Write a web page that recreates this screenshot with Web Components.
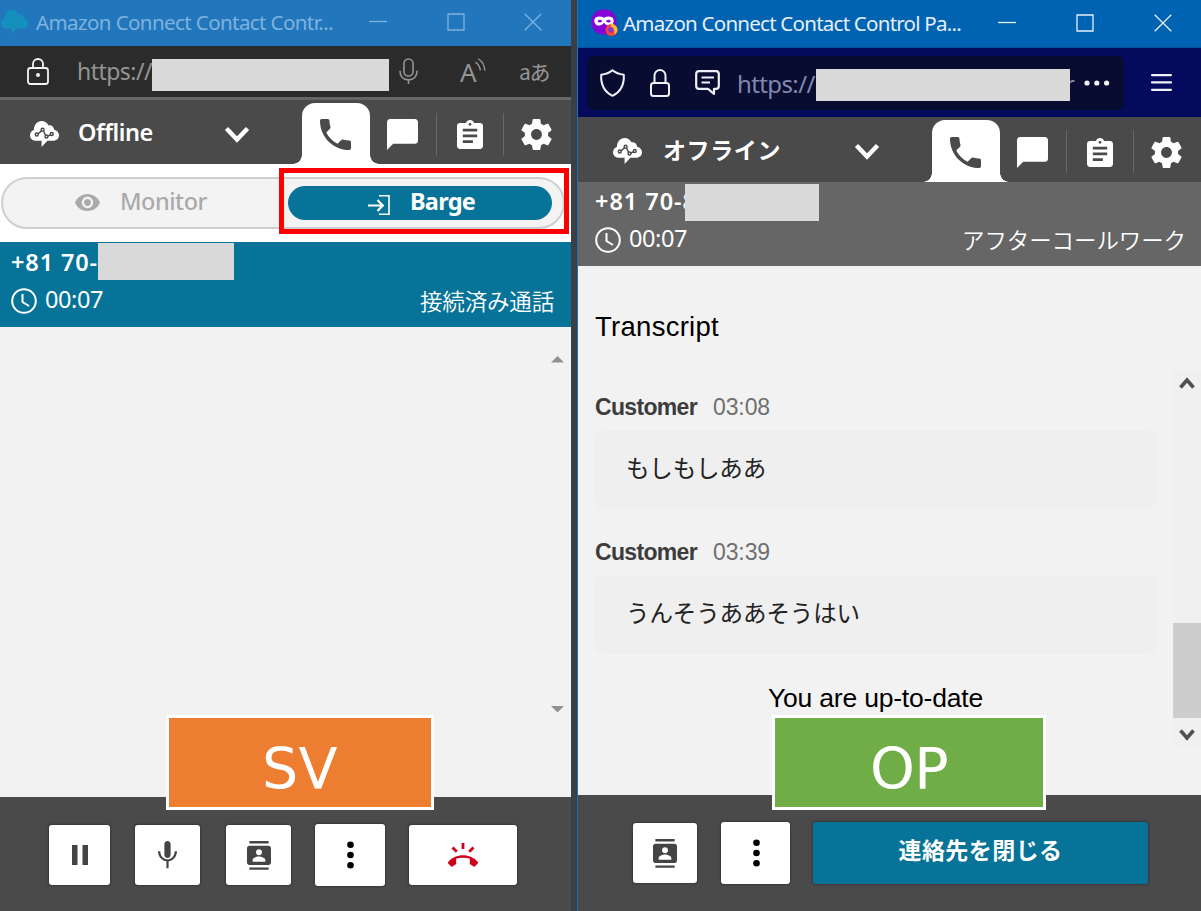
<!DOCTYPE html>
<html lang="ja">
<head>
<meta charset="utf-8">
<title>Contact Control Panel</title>
<style>
    body{
        margin: 0;
        width: 1201px;
        height: 911px;
        overflow: hidden;
        background-color: #3a4046;
        font-family: "Noto Sans", "Noto Sans CJK JP", sans-serif;
    }
</style>
</head>
<body>
<ccp-desktop></ccp-desktop>
<script>
const icons = {
    cloud: ['0 0 30 27', '<path fill="currentColor" d="M7 20.500C2.500 20.500 0 18 0 15c0-3 1.600-5 4-5.700C4 4 7.500 0 12 0c3.300 0 5.700 1.800 7 4.500 3-.8 5.700 1.300 6 4.500 3 .6 5 2.800 5 5.800 0 3.300-2.500 5.700-6 5.700h-6L12 27v-6.500z"/><g class="line" fill="none" stroke="#4a4a4a" stroke-width="1.500"><path d="m8 13.500 4-3.300M14 10.500l2 4M18.500 15.500l3-1.500"/><circle cx="7" cy="14" r="1.500"/><circle cx="13" cy="9" r="1.500"/><circle cx="17" cy="16" r="1.500"/><circle cx="22.500" cy="13.500" r="1.500"/></g>'],
    cloudSolid: ['0 0 30 27', '<path fill="currentColor" d="M7 20.500C2.500 20.500 0 18 0 15c0-3 1.600-5 4-5.700C4 4 7.500 0 12 0c3.300 0 5.700 1.800 7 4.500 3-.8 5.700 1.300 6 4.500 3 .6 5 2.800 5 5.800 0 3.300-2.500 5.700-6 5.700h-6L12 27v-6.500z"/>'],
    chevron: ['0 0 26 17', '<path d="m2.500 2.500 10.500 11 10.500-11" fill="none" stroke="currentColor" stroke-width="4.500"/>'],
    phone: ['3 3 18 18', '<path fill="currentColor" d="M6.620 10.790c1.440 2.830 3.760 5.140 6.590 6.590l2.200-2.200c.27-.27.67-.36 1.020-.24 1.120.37 2.330.57 3.570.57.55 0 1 .45 1 1V20c0 .55-.45 1-1 1-9.390 0-17-7.610-17-17 0-.55.45-1 1-1h3.500c.55 0 1 .45 1 1 0 1.250.2 2.450.57 3.570.11.35.03.74-.25 1.020l-2.200 2.200z"/>'],
    chat: ['2 2 20 20', '<path fill="currentColor" d="M20 2H4c-1.100 0-2 .9-2 2v18l4-4h14c1.100 0 2-.9 2-2V4c0-1.100-.9-2-2-2z"/>'],
    clipboard: ['3 1 18 20', '<path fill="currentColor" d="M19 3h-4.180C14.400 1.840 13.300 1 12 1c-1.300 0-2.400.84-2.820 2H5c-1.100 0-2 .9-2 2v14c0 1.100.9 2 2 2h14c1.100 0 2-.9 2-2V5c0-1.100-.9-2-2-2zm-7 0c.55 0 1 .45 1 1s-.45 1-1 1-1-.45-1-1 .45-1 1-1zm2 14H7v-2h7v2zm3-4H7v-2h10v2zm0-4H7V7h10v2z"/>'],
    gear: ['2 2 20 20', '<path fill="currentColor" d="M19.430 12.980c.04-.32.07-.64.07-.98s-.03-.66-.07-.98l2.110-1.650c.19-.15.24-.42.12-.64l-2-3.460c-.12-.22-.39-.3-.61-.22l-2.490 1c-.52-.4-1.080-.73-1.690-.98l-.38-2.650C14.460 2.180 14.250 2 14 2h-4c-.25 0-.46.18-.49.42l-.38 2.650c-.61.25-1.170.59-1.690.98l-2.490-1c-.23-.09-.49 0-.61.22l-2 3.460c-.13.22-.07.49.12.64l2.110 1.650c-.04.32-.07.65-.07.98s.03.66.07.98l-2.110 1.650c-.19.15-.24.42-.12.64l2 3.460c.12.22.39.3.61.22l2.490-1c.52.4 1.080.73 1.690.98l.38 2.650c.03.24.24.42.49.42h4c.25 0 .46-.18.49-.42l.38-2.650c.61-.25 1.170-.59 1.690-.98l2.490 1c.23.09.49 0 .61-.22l2-3.460c.12-.22.07-.49-.12-.64l-2.110-1.650zM12 15.500c-1.930 0-3.500-1.570-3.500-3.500s1.570-3.500 3.500-3.500 3.500 1.570 3.500 3.500-1.570 3.500-3.500 3.500z"/>'],
    eye: ['1 4.500 22 15', '<path fill="currentColor" d="M12 4.500C7 4.500 2.730 7.610 1 12c1.730 4.390 6 7.500 11 7.500s9.270-3.110 11-7.500c-1.730-4.390-6-7.500-11-7.500zM12 17c-2.760 0-5-2.240-5-5s2.240-5 5-5 5 2.240 5 5-2.240 5-5 5zm0-8c-1.660 0-3 1.340-3 3s1.340 3 3 3 3-1.340 3-3-1.340-3-3-3z"/>'],
    enter: ['0 0 22 20', '<g fill="none" stroke="currentColor"><path stroke-width="1.600" d="M11 .8h10v18.400H11"/><path stroke-width="2.200" d="M0 10.500h14M9.500 5l5.300 5.500L9.500 16"/></g>'],
    clock: ['0 0 26 26', '<g fill="none" stroke="currentColor" stroke-width="2"><circle cx="13" cy="13" r="11.800"/><path d="M11.500 6v8l6.500 4"/></g>'],
    pause: ['0 0 16 20', '<path fill="currentColor" d="M0 0h5.500v20H0zM10.500 0H16v20h-5.500z"/>'],
    mic: ['5 2 14 20', '<path fill="currentColor" d="M12 14.500c1.400 0 2.300-1 2.300-2.500V4.500C14.300 3 13.400 2 12 2S9.700 3 9.700 4.500V12c0 1.500.9 2.500 2.300 2.500zm5.300-5c0 3.500-2.500 6-5.300 6S6.700 13 6.700 9.500H5c0 4 2.800 7 6.200 7.500V22h1.600v-5c3.400-.5 6.200-3.500 6.200-7.500z"/>'],
    micLine: ['0 0 20 28', '<g fill="none" stroke="currentColor" stroke-width="1.700"><rect x="5.200" y="1" width="9.600" height="18" rx="4.800"/><path d="M1 13.500c0 6 3.500 9.500 9 9.500s9-3.500 9-9.500M10 23v4.500"/></g>'],
    contact: ['2 0 20 24', '<path fill="currentColor" fill-rule="evenodd" d="M20 4H4c-1.100 0-2 .9-2 2v12c0 1.100.9 2 2 2h16c1.100 0 2-.9 2-2V6c0-1.100-.9-2-2-2zM4 0h16v2H4zM4 22h16v2H4zM12 6.800c1.400 0 2.500 1.100 2.500 2.500s-1.100 2.500-2.500 2.500-2.500-1.100-2.500-2.500 1.100-2.500 2.500-2.500zM17.300 17.200H6.700v-1.400c0-1.900 3.500-2.900 5.300-2.900s5.300 1 5.300 2.900z"/>'],
    dots: ['0 0 7 28', '<g fill="currentColor"><circle cx="3.500" cy="3.800" r="3.300"/><circle cx="3.500" cy="14" r="3.300"/><circle cx="3.500" cy="24.200" r="3.300"/></g>'],
    hangup: ['0 0 30 24', '<path fill="currentColor" d="M0 19.200C4 14.500 9.300 12.300 15 12.300s11 2.200 15 6.900c.3.400.3.800 0 1.100l-3.200 3.100c-.4.400-.8.400-1.200.1-1-.9-2-1.600-3.200-2.100-.4-.2-.6-.5-.6-1v-4.800c-4.400-1.100-9.200-1.100-13.600 0v4.800c0 .5-.2.8-.6 1-1.200.5-2.200 1.200-3.200 2.100-.4.300-.8.300-1.200-.1L0 20.300c-.3-.3-.3-.7 0-1.100z"/><g stroke="currentColor" stroke-width="2.800"><path d="M15 0v6M4.500 4.500l4.300 4.300M25.500 4.500l-4.300 4.300"/></g>'],
    minimize: ['0 0 18 18', '<path d="M0 8.500h18" stroke="currentColor" stroke-width="1.300"/>'],
    maximize: ['0 0 18 18', '<path d="M1 1h16v16H1z" fill="none" stroke="currentColor" stroke-width="1.300"/>'],
    close: ['0 0 18 18', '<path d="m.7.700 16.600 16.600M17.300.7.700 17.300" stroke="currentColor" stroke-width="1.300"/>'],
    lockDot: ['0 0 22 27', '<g fill="none" stroke="currentColor" stroke-width="1.800"><rect x="1" y="10" width="20" height="16" rx="2.500"/><path d="M6 10V6a5 5 0 0 1 10 0v4"/></g><circle cx="11" cy="17" r="2" fill="currentColor"/>'],
    lock: ['0 0 20 28', '<g fill="none" stroke="currentColor" stroke-width="2"><rect x="1" y="14" width="18" height="13" rx="2.500"/><path d="M4.500 14V6.500a5.500 5.500 0 0 1 11 0V14"/></g>'],
    shield: ['0 0 25 28', '<path fill="none" stroke="currentColor" stroke-width="2" stroke-linejoin="round" d="M12.500 1.200c3 2.500 7 4 11.300 4.500.5 9-3 17-11.300 21.100C4.200 22.700.7 14.700 1.200 5.700 5.500 5.200 9.500 3.700 12.500 1.200z"/>'],
    notice: ['0 0 25 25', '<g fill="none" stroke="currentColor" stroke-width="2.200" stroke-linejoin="round"><path d="M4 1.200h17c1.800 0 2.800 1 2.800 2.800v12c0 1.800-1 2.800-2.800 2.800h-2V24l-6-5.200H4c-1.800 0-2.800-1-2.800-2.800V4c0-1.800 1-2.800 2.800-2.800z"/><path stroke-width="1.900" d="M6.500 7.500H19M6.500 12.500h8.500"/></g>'],
    more: ['0 0 26 6', '<g fill="currentColor"><circle cx="3" cy="3" r="2.600"/><circle cx="12.800" cy="3" r="2.600"/><circle cx="22.600" cy="3" r="2.600"/></g>'],
    menu: ['0 0 20 18', '<path d="M1 2h18M1 9h18M1 16h18" stroke="currentColor" stroke-width="2.200" stroke-linecap="round"/>'],
    waves: ['0 0 12 15', '<g fill="none" stroke="currentColor" stroke-width="1.500"><path d="M3.500.800C8 3.500 10.500 8 10.800 14"/><path d="M.5 4.500c3 2 4.800 5 5.300 9"/></g>'],
    firefox: ['0 0 27 27', '<circle cx="13" cy="13" r="12.800" fill="#8405d6"/><path fill="#fff" d="M5 8.200c2.500-1.200 5.500-1 8 .5 2.500-1.500 5.500-1.700 8-.5 1.600 1 2 3 1.500 5-.7 2.500-2.700 3.600-5 3.400-2-.1-3.200-1.300-4.500-2.800-1.300 1.500-2.500 2.700-4.500 2.800-2.300.2-4.300-.9-5-3.400-.5-2-.1-4 1.500-5z"/><path fill="#8405d6" d="M6.300 12.300c1.500-2 3.700-2 5 0-1.300 1.700-3.500 1.700-5 0zM15 12.300c1.500-2 3.700-2 5 0-1.300 1.700-3.500 1.700-5 0z"/><circle cx="20.500" cy="21" r="6" fill="#ff4038"/><path fill="#ffbd2e" d="M20 14.500c3.500.5 6.500 3 6.500 6.500-.3 2.500-1.800 4-3.500 4.500 1.500-3 .5-6-3-6.500z"/><circle cx="19.800" cy="20.800" r="2.800" fill="#8338c9"/>'],
    triangle: ['0 0 14 7', '<path d="M0 7 7 0l7 7z" fill="currentColor"/>'],
    arrow: ['0 0 16 13', '<path d="m1.500 10.500 6.500-7.500 6.500 7.500" fill="none" stroke="currentColor" stroke-width="3.600"/>']
};

class CcpIcon extends HTMLElement {
    constructor(){
        super();
        this.attachShadow({mode: 'open'});
    }
    connectedCallback(){
        const [viewBox, shape] = icons[this.getAttribute('name')];
        const [, , w, h] = viewBox.split(' ').map(Number);
        const width = Number(this.getAttribute('width')) || w;
        this.shadowRoot.innerHTML = `
            <style>
                :host{ display: block; flex: none; }
                svg{ display: block; overflow: visible; }
            </style>
            <svg viewBox="${viewBox}" width="${width}" height="${width * h / w}">${shape}</svg>
        `;
    }
}
customElements.define('ccp-icon', CcpIcon);

// One line of text, tracked so that it fills the given width
class FitLabel extends HTMLElement {
    constructor(){
        super();
        this.attachShadow({mode: 'open'});
        this.shadowRoot.innerHTML = `
            <style>
                :host{ display: block; flex: none; line-height: 1; }
                div{ width: max-content; white-space: pre; }
            </style>
            <div><slot></slot></div>
        `;
    }
    connectedCallback(){
        const width = Number(this.getAttribute('width'));
        const line = this.shadowRoot.querySelector('div');
        const natural = line.getBoundingClientRect().width;
        if(!width || !natural) return;
        line.style.letterSpacing = (width - natural) / this.textContent.length + 'px';
        this.style.width = width + 'px';
    }
}
customElements.define('fit-label', FitLabel);

class WindowTitle extends HTMLElement {
    constructor(){
        super();
        this.attachShadow({mode: 'open'});
        this.shadowRoot.innerHTML = `
            <style>
                :host{
                    display: flex;
                    align-items: center;
                    justify-content: space-between;
                    box-sizing: border-box;
                    font-size: 20.5px;
                }
                div{ display: flex; align-items: center; }
                .controls{ column-gap: var(--controls-gap, 59.500px); }
            </style>
            <div><slot></slot></div>
            <div class="controls">
                <ccp-icon name="minimize" width="18"></ccp-icon>
                <ccp-icon name="maximize" width="18"></ccp-icon>
                <ccp-icon name="close" width="18"></ccp-icon>
            </div>
        `;
    }
}
customElements.define('window-title', WindowTitle);

class CcpTabs extends HTMLElement {
    constructor(){
        super();
        this.attachShadow({mode: 'open'});
        this.shadowRoot.innerHTML = `
            <style>
                :host{
                    display: flex;
                    background-color: #4a4a4a;
                    color: #fff;
                    font-size: 23.5px;
                    font-weight: 600;
                }
                .status{
                    flex: 1;
                    display: flex;
                    align-items: center;
                    padding: 4px 52px 0 var(--status-left, 30px);
                }
                .status .chevron{ margin-left: auto; }
                .tab{
                    width: 67px;
                    box-sizing: border-box;
                    display: flex;
                    align-items: center;
                    justify-content: center;
                    padding: 5px 2px 0 0;
                    background: linear-gradient(#686868, #686868) right 0 top 13px / 1px 43px no-repeat;
                }
                .tab.plain{ background: none; padding-right: 3px; }
                .tab.active{
                    position: relative;
                    margin-top: 3px;
                    padding-top: 2px;
                    width: 68px;
                    background: #fff;
                    color: #4a4a4a;
                    border-radius: 13px 13px 0 0;
                }
                .active::before, .active::after{
                    content: '';
                    position: absolute;
                    bottom: 0;
                    width: 9px;
                    height: 9px;
                }
                .active::before{
                    right: 100%;
                    background: radial-gradient(circle at 0 0, transparent 8.500px, #fff 9px);
                }
                .active::after{
                    left: 100%;
                    background: radial-gradient(circle at 100% 0, transparent 8.500px, #fff 9px);
                }
            </style>
            <div class="status">
                <ccp-icon name="cloud" width="29"></ccp-icon>
                <slot></slot>
                <ccp-icon class="chevron" name="chevron" width="26"></ccp-icon>
            </div>
            <div class="tab active"><ccp-icon name="phone" width="31"></ccp-icon></div>
            <div class="tab"><ccp-icon name="chat" width="31"></ccp-icon></div>
            <div class="tab"><ccp-icon name="clipboard" width="26"></ccp-icon></div>
            <div class="tab plain"><ccp-icon name="gear" width="31"></ccp-icon></div>
        `;
    }
}
customElements.define('ccp-tabs', CcpTabs);

class CallCard extends HTMLElement {
    constructor(){
        super();
        this.attachShadow({mode: 'open'});
        this.shadowRoot.innerHTML = `
            <style>
                :host{
                    display: flex;
                    flex-direction: column;
                    box-sizing: border-box;
                    position: relative;
                    color: #fff;
                    font-size: 23.500px;
                    background-color: var(--card-background);
                }
                .number{ height: 22px; font-weight: 600; }
                .row{
                    display: flex;
                    align-items: center;
                    height: 26px;
                    margin-top: 15px;
                }
                .timer{ margin: -2px 0 0 8px; }
                .state{ margin: -1px 0 0 auto; font-size: 22.500px; font-family: "Noto Sans CJK JP", sans-serif; font-weight: 350; }
            </style>
            <div class="number"><slot name="number"></slot></div>
            <div class="row">
                <ccp-icon name="clock" width="26"></ccp-icon>
                <fit-label class="timer" width="58">00:07</fit-label>
                <div class="state"><slot name="state"></slot></div>
            </div>
        `;
    }
}
customElements.define('call-card', CallCard);

class CcpButton extends HTMLElement {
    constructor(){
        super();
        this.attachShadow({mode: 'open'});
        this.shadowRoot.innerHTML = `
            <style>
                :host{
                    display: flex;
                    align-items: center;
                    justify-content: center;
                    box-sizing: border-box;
                    height: 60px;
                    border-radius: 3px;
                    background-color: #fff;
                    color: #444;
                    box-shadow: 0 0 2px 1px rgba(0, 0, 0, .25);
                }
            </style>
            <slot></slot>
        `;
    }
}
customElements.define('ccp-button', CcpButton);

class TranscriptEntry extends HTMLElement {
    constructor(){
        super();
        this.attachShadow({mode: 'open'});
    }
    connectedCallback(){
        this.shadowRoot.innerHTML = `
            <style>
                :host{ display: block; }
                .head{
                    display: flex;
                    column-gap: 16px;
                    box-sizing: border-box;
                    height: 35px;
                    padding-top: 1px;
                    font: 23px "Liberation Sans", sans-serif;
                    color: #6f6f6f;
                }
                .who{ font-weight: bold; color: #3c3c3c; }
                .text{
                    box-sizing: border-box;
                    width: 561px;
                    height: 79px;
                    padding: 27px 31px;
                    border-radius: 8px;
                    background-color: #efefef;
                    color: #222;
                    font-size: 23.500px;
                }
            </style>
            <div class="head">
                <fit-label class="who" width="102">Customer</fit-label>
                <fit-label width="57">${this.getAttribute('time')}</fit-label>
            </div>
            <div class="text"><slot></slot></div>
        `;
    }
}
customElements.define('transcript-entry', TranscriptEntry);

// Grey cover over private data
class MaskBlock extends HTMLElement {
    constructor(){
        super();
        this.attachShadow({mode: 'open'});
        this.shadowRoot.innerHTML = `<style>:host{ display: block; background-color: #d9d9d9; }</style>`;
    }
}
customElements.define('mask-block', MaskBlock);

class RoleBadge extends HTMLElement {
    constructor(){
        super();
        this.attachShadow({mode: 'open'});
        this.shadowRoot.innerHTML = `
            <style>
                :host{
                    position: absolute;
                    display: flex;
                    justify-content: center;
                    box-sizing: border-box;
                    height: 95px;
                    padding-top: 23px;
                    border: 3px solid #fff;
                    color: #fff;
                    font: 57px "DejaVu Sans", sans-serif;
                }
            </style>
            <slot></slot>
        `;
    }
}
customElements.define('role-badge', RoleBadge);

class SupervisorWindow extends HTMLElement {
    constructor(){
        super();
        this.attachShadow({mode: 'open'});
        this.shadowRoot.innerHTML = `
            <style>
                :host{
                    position: relative;
                    display: flex;
                    flex-direction: column;
                    width: 571px;
                    height: 911px;
                    background-color: #f2f2f2;
                }
                window-title{
                    height: 46px;
                    padding: 0 29px 2px 1px;
                    background-color: #2277bc;
                    color: #7fb2dc;
                }
                window-title > ccp-icon{ color: #158fbd; }
                window-title fit-label{ margin-left: 8px; }
                .address{
                    display: flex;
                    align-items: center;
                    box-sizing: border-box;
                    height: 54px;
                    padding-left: 27px;
                    border-bottom: 3px solid #666;
                    background-color: #2b2b2b;
                    color: #959595;
                    font-size: 23px;
                }
                .address .lock{ color: #f4f4f4; }
                .address .url{ margin: 0 0 0 28px; }
                .address mask-block{ width: 237px; height: 32px; margin-top: 7px; }
                .address .mic{ margin-left: 10px; }
                .address .read{ margin-left: 42px; font-size: 26px; }
                .address .waves{ margin: -13px 0 0 -2px; }
                .address .translate{ margin-left: 33px; font-family: "Noto Sans CJK JP", sans-serif; font-size: 21px; }
                ccp-tabs{ height: 64px; }
                .modes{
                    position: relative;
                    box-sizing: border-box;
                    height: 78px;
                    padding: 13px 6px 0 1px;
                    background-color: #fff;
                    font-size: 23.5px;
                    font-weight: 600;
                }
                .pill{
                    display: flex;
                    align-items: center;
                    box-sizing: border-box;
                    height: 52px;
                    padding: 0 11px 0 72px;
                    border: 2px solid #cfcfcf;
                    border-radius: 26px;
                    background-color: #f3f3f3;
                    color: #aaa;
                }
                .pill .monitor{ margin: -3px 0 0 20px; font-weight: 500; }
                .barge{
                    display: flex;
                    align-items: center;
                    box-sizing: border-box;
                    width: 264px;
                    height: 34px;
                    margin-left: auto;
                    padding-left: 80px;
                    border-radius: 17px;
                    background-color: #077398;
                    color: #fff;
                }
                .barge fit-label{ margin: -2px 0 0 20px; font-weight: 700; }
                .barge ccp-icon{ margin-top: 4px; }
                .outline{
                    position: absolute;
                    left: 279px;
                    top: 4px;
                    box-sizing: border-box;
                    width: 290px;
                    height: 66px;
                    border: 5px solid #f00;
                }
                call-card{
                    --card-background: #077398;
                    height: 85px;
                    padding: 9px 17px 0 11px;
                }
                call-card mask-block{ position: absolute; left: 98px; top: 1px; width: 136px; height: 37px; }
                .body{
                    flex: 1;
                    display: flex;
                    flex-direction: column;
                    justify-content: space-between;
                    align-items: flex-end;
                    padding: 29px 7px 85px;
                    color: #919191;
                }
                .down{ transform: rotate(180deg); }
                .footer{
                    display: flex;
                    align-items: center;
                    box-sizing: border-box;
                    height: 114px;
                    padding: 2px 0 0 49px;
                    background-color: #4a4a4a;
                }
                role-badge{ left: 166px; top: 715px; width: 268px; background-color: #ed7d31; }
            </style>
            <window-title>
                <ccp-icon name="cloudSolid" width="27"></ccp-icon>
                <fit-label width="297">Amazon Connect Contact Contr...</fit-label>
            </window-title>
            <div class="address">
                <ccp-icon class="lock" name="lockDot" width="22"></ccp-icon>
                <fit-label class="url" width="75">https://</fit-label>
                <mask-block></mask-block>
                <ccp-icon class="mic" name="micLine" width="19"></ccp-icon>
                <fit-label class="read" width="17">A</fit-label>
                <ccp-icon class="waves" name="waves" width="11"></ccp-icon>
                <fit-label class="translate" width="30">aあ</fit-label>
            </div>
            <ccp-tabs><fit-label style="margin:-2px 0 0 19px" width="75">Offline</fit-label></ccp-tabs>
            <div class="modes">
                <div class="pill">
                    <ccp-icon name="eye" width="25"></ccp-icon>
                    <fit-label class="monitor" width="87">Monitor</fit-label>
                    <div class="barge">
                        <ccp-icon name="enter" width="22"></ccp-icon>
                        <fit-label width="65">Barge</fit-label>
                    </div>
                </div>
                <div class="outline"></div>
            </div>
            <call-card>
                <fit-label slot="number" width="87">+81 70-</fit-label>
                <fit-label slot="state" width="134">接続済み通話</fit-label>
                <mask-block slot="number"></mask-block>
            </call-card>
            <div class="body">
                <ccp-icon name="triangle" width="13"></ccp-icon>
                <ccp-icon class="down" name="triangle" width="13"></ccp-icon>
            </div>
            <div class="footer">
                <ccp-button style="width:61px"><ccp-icon name="pause" width="16"></ccp-icon></ccp-button>
                <ccp-button style="width:65px;margin-left:25px"><ccp-icon name="mic" width="19"></ccp-icon></ccp-button>
                <ccp-button style="width:65px;margin-left:26px"><ccp-icon name="contact" width="24"></ccp-icon></ccp-button>
                <ccp-button style="width:70px;height:62px;margin-left:24px;color:#000"><ccp-icon name="dots" width="7"></ccp-icon></ccp-button>
                <ccp-button style="width:108px;margin-left:24px;color:#d0021b"><ccp-icon name="hangup" width="30"></ccp-icon></ccp-button>
            </div>
            <role-badge><fit-label width="76">SV</fit-label></role-badge>
        `;
    }
}
customElements.define('supervisor-window', SupervisorWindow);

class OperatorWindow extends HTMLElement {
    constructor(){
        super();
        this.attachShadow({mode: 'open'});
        this.shadowRoot.innerHTML = `
            <style>
                :host{
                    position: relative;
                    display: flex;
                    flex-direction: column;
                    box-sizing: border-box;
                    width: 624px;
                    height: 911px;
                    border-left: 1px solid #1f6cae;
                    background-color: #f2f2f2;
                }
                window-title{
                    --controls-gap: 60px;
                    height: 47px;
                    padding: 0 29px 2px 13px;
                    background-color: #0063b1;
                    color: #e6effa;
                }
                window-title fit-label{ margin-left: 5px; padding-top: 2px; }
                .toolbar{
                    display: flex;
                    align-items: center;
                    box-sizing: border-box;
                    height: 70px;
                    padding: 0 29px 0 9px;
                    border-top: 1px solid #0a4f9c;
                    background-color: #040a5c;
                    color: #f0f0f8;
                }
                .address{
                    position: relative;
                    display: flex;
                    align-items: center;
                    box-sizing: border-box;
                    width: 537px;
                    height: 54px;
                    padding-left: 13px;
                    border-radius: 6px;
                    background-color: #070c30;
                }
                .address .url{ margin: 2px 0 0 17px; color: #8487ae; font-size: 24px; }
                .address mask-block{ position: absolute; left: 229px; top: 13px; width: 254px; height: 32px; }
                .address .tail{ margin: 3px 0 0 236px; color: #8487ae; font-size: 24px; }
                .address .more{ margin: 0 0 0 10px; }
                .menu{ margin-left: auto; }
                ccp-tabs{ --status-left: 35px; height: 65px; }
                call-card{
                    --card-background: #666;
                    height: 84px;
                    padding: 8px 15px 0 17px;
                }
                call-card mask-block{ position: absolute; left: 107px; top: 2px; width: 134px; height: 37px; }
                .content{ flex: 1; display: flex; }
                .transcript{ flex: 1; padding: 47px 0 0 17px; }
                .title{ height: 82px; font: 27.5px "Liberation Sans", sans-serif; line-height: 1; }
                transcript-entry{ height: 145px; }
                .status{ margin: 0 0 0 173px; font: 26.5px "Liberation Sans", sans-serif; line-height: 1; }
                .scroll{
                    display: flex;
                    flex-direction: column;
                    align-items: center;
                    box-sizing: border-box;
                    width: 28px;
                    height: 378px;
                    margin-top: 104px;
                    padding-top: 7px;
                    color: #505050;
                    background-color: #f0f0f0;
                }
                .thumb{ width: 28px; height: 95px; margin: 233px 0 10px; background-color: #cdcdcd; }
                .down{ transform: rotate(180deg); }
                .footer{
                    display: flex;
                    align-items: center;
                    box-sizing: border-box;
                    height: 116px;
                    padding-left: 55px;
                    background-color: #4a4a4a;
                }
                .close{
                    width: 335px;
                    height: 62px;
                    margin-left: 23px;
                    padding-bottom: 5px;
                    background-color: #077398;
                    color: #fff;
                    font-size: 23px;
                    font-weight: 700;
                }
                role-badge{ left: 194px; top: 715px; width: 274px; background-color: #70ad47; }
            </style>
            <window-title>
                <ccp-icon name="firefox" width="27"></ccp-icon>
                <fit-label width="338">Amazon Connect Contact Control Pa...</fit-label>
            </window-title>
            <div class="toolbar">
                <div class="address">
                    <ccp-icon name="shield" width="25"></ccp-icon>
                    <ccp-icon style="margin-left:25px" name="lock" width="20"></ccp-icon>
                    <ccp-icon style="margin-left:25px" name="notice" width="25"></ccp-icon>
                    <fit-label class="url" width="92">https://u</fit-label>
                    <fit-label class="tail" width="9">r</fit-label>
                    <ccp-icon class="more" name="more" width="26"></ccp-icon>
                    <mask-block></mask-block>
                </div>
                <ccp-icon class="menu" name="menu" width="21"></ccp-icon>
            </div>
            <ccp-tabs><fit-label style="margin:-2px 0 0 21px;font-size:23px" width="118">オフライン</fit-label></ccp-tabs>
            <call-card>
                <fit-label slot="number" width="102">+81 70-8</fit-label>
                <fit-label slot="state" width="224">アフターコールワーク</fit-label>
                <mask-block slot="number"></mask-block>
            </call-card>
            <div class="content">
                <div class="transcript">
                    <div class="title"><fit-label width="124">Transcript</fit-label></div>
                    <transcript-entry time="03:08"><fit-label width="140">もしもしああ</fit-label></transcript-entry>
                    <transcript-entry time="03:39"><fit-label width="234">うんそうああそうはい</fit-label></transcript-entry>
                    <div class="status"><fit-label width="215">You are up-to-date</fit-label></div>
                </div>
                <div class="scroll">
                    <ccp-icon name="arrow" width="16"></ccp-icon>
                    <div class="thumb"></div>
                    <ccp-icon class="down" name="arrow" width="16"></ccp-icon>
                </div>
            </div>
            <div class="footer">
                <ccp-button style="width:64px"><ccp-icon name="contact" width="24"></ccp-icon></ccp-button>
                <ccp-button style="width:69px;height:62px;margin-left:24px;color:#000"><ccp-icon style="margin-left:2px" name="dots" width="7"></ccp-icon></ccp-button>
                <ccp-button class="close"><fit-label width="164">連絡先を閉じる</fit-label></ccp-button>
            </div>
            <role-badge><fit-label width="78">OP</fit-label></role-badge>
        `;
    }
}
customElements.define('operator-window', OperatorWindow);

class CcpDesktop extends HTMLElement {
    constructor(){
        super();
        this.attachShadow({mode: 'open'});
        this.shadowRoot.innerHTML = `
            <style>
                :host{ display: flex; column-gap: 6px; }
            </style>
            <supervisor-window></supervisor-window>
            <operator-window></operator-window>
        `;
    }
}
customElements.define('ccp-desktop', CcpDesktop);
</script>
</body>
</html>
